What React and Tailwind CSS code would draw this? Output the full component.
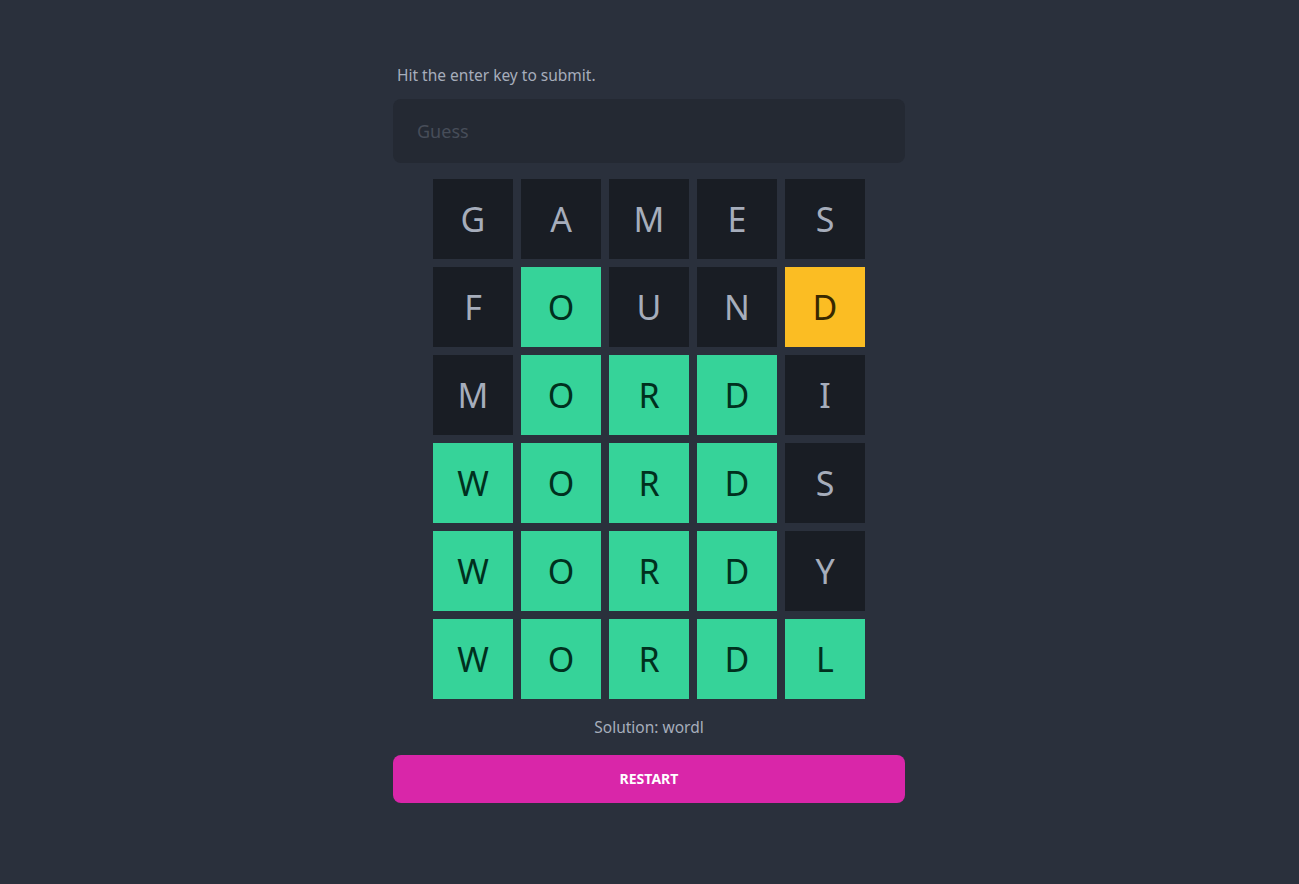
import React, { useState } from 'react';

const guesses = [
  ['G', 'A', 'M', 'E', 'S'],
  ['F', 'O', 'U', 'N', 'D'],
  ['M', 'O', 'R', 'D', 'I'],
  ['W', 'O', 'R', 'D', 'S'],
  ['W', 'O', 'R', 'D', 'Y'],
  ['W', 'O', 'R', 'D', 'L'],
];

const solution = 'wordl';

// green = right place, yellow = in word, dark = miss
function tileClass(letter, i) {
  const l = letter.toLowerCase();
  if (solution[i] === l) return 'bg-[#36d399] text-[#00301e]';
  if (solution.includes(l)) return 'bg-[#fbbd23] text-[#382800]';
  return 'bg-[#191d24] text-[#a6adbb]';
}

function App() {
  const [guess, setGuess] = useState('');

  return (
    <div className="min-h-screen bg-[#2a303c] pr-px font-['Noto_Sans',sans-serif]">
      <div className="w-[512px] mx-auto pt-[63px]">
        <p className="pl-1 text-[15.5px] leading-6 text-[#a6adbb]">Hit the enter key to submit.</p>

        <input
          value={guess}
          onChange={(e) => setGuess(e.target.value)}
          placeholder="Guess"
          className="mt-3 w-full h-16 rounded-lg bg-[#242933] px-6 text-lg text-[#a6adbb] placeholder:text-[#474d59] outline-none"
        />

        <div className="mt-4 flex flex-col items-center gap-2">
          {guesses.map((row, r) => (
            <div key={r} className="flex gap-2">
              {row.map((letter, i) => (
                <div key={i} className={`w-20 h-20 flex items-center justify-center text-[34px] ${tileClass(letter, i)}`}>
                  {letter}
                </div>
              ))}
            </div>
          ))}
        </div>

        <p className="mt-4 text-center text-[15.5px] leading-6 text-[#a6adbb]">Solution: {solution}</p>

        <button className="mt-4 w-full h-12 rounded-lg bg-[#d926a9] text-sm font-bold uppercase text-white">
          Restart
        </button>
      </div>
    </div>
  );
}

export default App;
